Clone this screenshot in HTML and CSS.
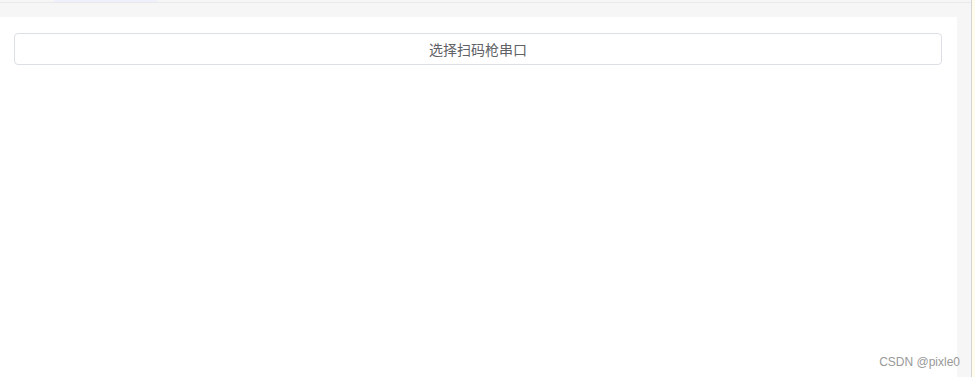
FILE: index.html
```html
<!DOCTYPE html>
<html lang="zh-CN">
<head>
  <meta charset="UTF-8">
  <meta name="viewport" content="width=device-width, initial-scale=1.0">
  <link rel="stylesheet" href="styles.css">
  <title>扫码枪串口</title>
</head>
<body>
  <div id="app">
    <div class="main">
      <div class="tabs">
        <span class="tab active"></span>
      </div>
      <div class="panel">
        <button class="btn" type="button">选择扫码枪串口</button>
      </div>
    </div>
    <div class="edge"></div>
  </div>
  <div class="mark">CSDN @pixle0</div>
</body>
</html>
```

FILE: styles.css
```css
/* page */
body {
  margin: 0;
  font-family: "Noto Sans CJK SC", "Liberation Sans", sans-serif;
  background-color: #f6f6f6;
  height: 377px;
  overflow: hidden;
}

#app {
  display: flex;
  height: 100%;
}

.main {
  flex: 1;
  display: flex;
  flex-direction: column;
  padding-right: 14px;
}

.tabs {
  height: 2px;
  border-bottom: 1px solid #e9e9e9;
  padding-left: 54px;
  margin-bottom: 14px;
  margin-right: -14px;
}

.tab {
  display: block;
  width: 103px;
  height: 2px;
}

.tab.active {
  background-color: #eef0fc;
}

.panel {
  flex: 1;
  background-color: #fff;
  padding: 16px 15px 0 14px;
}

.btn {
  display: block;
  width: 100%;
  height: 32px;
  padding: 0;
  font-family: "Noto Sans CJK SC", "Liberation Sans", sans-serif;
  font-size: 14px;
  color: #606266;
  background-color: #fff;
  border: 1px solid #dcdfe6;
  border-radius: 4px;
  cursor: pointer;
}

.edge {
  width: 3px;
  border-left: 1px solid #d4d4d4;
  background-color: #fffcee;
}

.mark {
  position: absolute;
  right: 15px;
  bottom: 8px;
  font-family: "Liberation Sans", Arial, sans-serif;
  font-size: 12px;
  color: #999;
}
```
